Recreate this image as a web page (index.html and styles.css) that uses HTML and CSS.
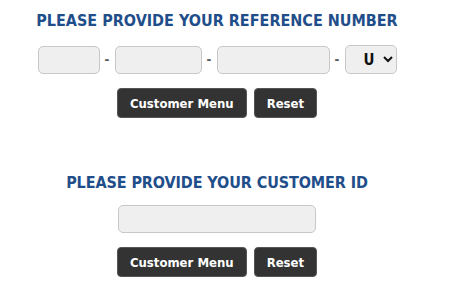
FILE: index.html
```html
<!DOCTYPE html>
<html lang="en">
    <head>
        <title>Customer Lookup</title>
        <meta charset="UTF-8">
        <meta name="viewport" content="width=device-width, initial-scale=1">
        <link rel="stylesheet" href="styles.css">
    </head>

    <body>
        <div class="page">
            <form class="lookup lookup-ref">
                <h2 class="lookup-title">PLEASE PROVIDE YOUR REFERENCE NUMBER</h2>
                <div class="ref-row">
                    <input class="field field-a" type="text">
                    <span class="dash">-</span>
                    <input class="field field-b" type="text">
                    <span class="dash">-</span>
                    <input class="field field-c" type="text">
                    <span class="dash">-</span>
                    <select class="field-select">
                        <option>U</option>
                    </select>
                </div>
                <div class="actions">
                    <button type="button" class="btn">Customer Menu</button>
                    <button type="reset" class="btn">Reset</button>
                </div>
            </form>

            <form class="lookup lookup-id">
                <h2 class="lookup-title">PLEASE PROVIDE YOUR CUSTOMER ID</h2>
                <div class="id-row">
                    <input class="field field-id" type="text">
                </div>
                <div class="actions">
                    <button type="button" class="btn">Customer Menu</button>
                    <button type="reset" class="btn">Reset</button>
                </div>
            </form>
        </div>
    </body>
</html>
```

FILE: styles.css
```css
body {
    margin: 0;
    background-color: #ffffff;
    font-family: "DejaVu Sans Condensed", "DejaVu Sans", sans-serif;
}
.page {
    width: 434px;
    padding-top: 11px;
}
.lookup {
    display: flex;
    flex-direction: column;
    align-items: center;
    margin: 0;
}
.lookup-id {
    margin-top: 55px;
}
.lookup-title {
    font-size: 16px;
    line-height: 20px;
    font-weight: bold;
    color: #1f4e8a;
    margin: 0;
}
.lookup-id .lookup-title {
    letter-spacing: -0.1px;
}
.ref-row {
    display: flex;
    align-items: center;
    margin-top: 14px;
}
.id-row {
    margin-top: 12px;
}
.field {
    box-sizing: border-box;
    height: 28px;
    background-color: #efefef;
    border: 1px solid #c8c8c8;
    border-radius: 5px;
    padding: 0 6px;
    margin: 0;
}
.field-a { width: 62px; }
.field-b { width: 87px; }
.field-c { width: 113px; }
.field-id { width: 198px; }
.dash {
    width: 15px;
    text-align: center;
    font-size: 13px;
    font-weight: bold;
    color: #555;
}
.field-select {
    box-sizing: border-box;
    width: 52px;
    height: 29px;
    background-color: #efefef;
    border: 1px solid #c8c8c8;
    border-radius: 5px;
    font-family: inherit;
    font-size: 15px;
    font-weight: bold;
    color: #111;
    padding: 0 0 0 14px;
    margin: 0;
}
.actions {
    display: flex;
    gap: 7px;
    margin-top: 14px;
}
.lookup-id .actions {
    margin-top: 14px;
}
.btn {
    box-sizing: border-box;
    height: 30px;
    padding: 0 12px;
    background-color: #333333;
    color: #ffffff;
    border: 1px solid #555555;
    border-radius: 4px;
    font-family: inherit;
    font-size: 13px;
    font-weight: bold;
}
```
